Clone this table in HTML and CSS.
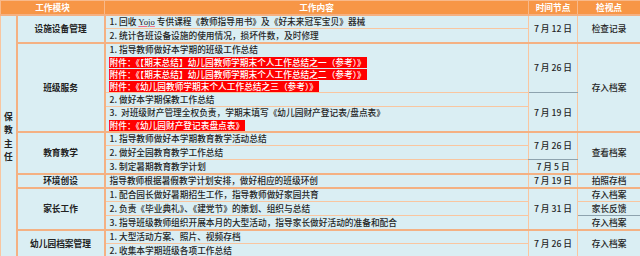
FILE: index.html
```html
<!DOCTYPE html>
<html lang="zh-CN">
<head>
<meta charset="utf-8">
<title>保教主任工作安排</title>
<link rel="stylesheet" href="styles.css">
</head>
<body>
<table class="plan">
  <colgroup>
    <col class="c-role"><col class="c-mod"><col class="c-content"><col class="c-time"><col class="c-check">
  </colgroup>
  <thead>
    <tr><th colspan="2">工作模块</th><th>工作内容</th><th>时间节点</th><th>检视点</th></tr>
  </thead>
  <tbody>
    <tr class="grp">
      <td rowspan="14" class="role"><span class="vert">保教主任</span></td>
      <td rowspan="2" class="mod">设施设备管理</td>
      <td class="txt">1. 回收 <span class="sp">Yojo</span> 专供课程《教师指导用书》及《好未来冠军宝贝》器械</td>
      <td rowspan="2" class="ctr">7 月 12 日</td>
      <td rowspan="2" class="ctr">检查记录</td>
    </tr>
    <tr><td class="txt">2. 统计各班设备设施的使用情况，损坏件数，及时修理</td></tr>
    <tr class="grp">
      <td rowspan="3" class="mod">班级服务</td>
      <td class="txt">1. 指导教师做好本学期的班级工作总结<br><span class="att">附件：《【期末总结】幼儿园教师学期末个人工作总结之一（参考）》</span><br><span class="att">附件：《【期末总结】幼儿园教师学期末个人工作总结之二（参考）》</span><br><span class="att">附件：《幼儿园教师学期末个人工作总结之三（参考）》</span></td>
      <td class="ctr gray-b">7 月 26 日</td>
      <td rowspan="3" class="ctr">存入档案</td>
    </tr>
    <tr><td class="txt">2. 做好本学期保教工作总结</td><td rowspan="2" class="ctr">7 月 19 日</td></tr>
    <tr class="two"><td class="txt">3.&nbsp; 对班级财产管理全权负责，学期末填写《幼儿园财产登记表/盘点表》<br><span class="att">附件：《幼儿园财产登记表盘点表》</span></td></tr>
    <tr class="grp">
      <td rowspan="3" class="mod">教育教学</td>
      <td class="txt">1. 指导教师做好本学期教育教学活动总结</td>
      <td rowspan="2" class="ctr gray-b">7 月 26 日</td>
      <td rowspan="3" class="ctr">查看档案</td>
    </tr>
    <tr><td class="txt">2. 做好全园教育教学工作总结</td></tr>
    <tr><td class="txt">3. 制定暑期教育教学计划</td><td class="ctr">7 月 5 日</td></tr>
    <tr class="grp">
      <td class="mod">环境创设</td>
      <td class="txt">指导教师根据暑假教学计划安排，做好相应的班级环创</td>
      <td class="ctr">7 月 19 日</td>
      <td class="ctr">拍照存档</td>
    </tr>
    <tr class="grp">
      <td rowspan="3" class="mod">家长工作</td>
      <td class="txt">1. 配合园长做好暑期招生工作，指导教师做好家园共育</td>
      <td rowspan="3" class="ctr">7 月 31 日</td>
      <td class="ctr">存入档案</td>
    </tr>
    <tr><td class="txt">2. 负责《毕业典礼》、《建党节》的策划、组织与总结</td><td class="ctr gray-b">家长反馈</td></tr>
    <tr><td class="txt">3. 指导班级教师组织开展本月的大型活动，指导家长做好活动的准备和配合</td><td class="ctr">存入档案</td></tr>
    <tr class="grp">
      <td rowspan="2" class="mod">幼儿园档案管理</td>
      <td class="txt">1. 大型活动方案、照片、视频存档</td>
      <td rowspan="2" class="ctr">7 月 26 日</td>
      <td rowspan="2" class="ctr">存入档案</td>
    </tr>
    <tr><td class="txt">2. 收集本学期班级各项工作总结</td></tr>
  </tbody>
</table>
</body>
</html>
```

FILE: styles.css
```css
html, body {
  margin: 0;
  padding: 0;
  background: #ffffff;
}

body {
  font-family: "Noto Sans CJK SC", sans-serif;
  font-size: 8.7px;
  color: #262626;
}

.plan {
  width: 640px;
  table-layout: fixed;
  border-collapse: collapse;
  border: 1px solid #f4b183;
}

.c-role { width: 16px; }
.c-mod { width: 88px; }
.c-content { width: 424px; }
.c-time { width: 49px; }
.c-check { width: 63px; }

.plan th {
  background: #f79646;
  color: #ffffff;
  font-weight: bold;
  height: 13px;
  line-height: 13px;
  padding: 0;
  text-align: center;
  border: 1px solid #f8b98a;
  border-bottom-color: #f4b183;
}

.plan td {
  background: #daeef3;
  height: 12px;
  line-height: 12px;
  padding: 0 3px;
  border: 1px solid #f9c6a0;
  vertical-align: middle;
  white-space: nowrap;
  overflow: hidden;
}

.plan tr:not(.grp) > td {
  height: 13px;
  line-height: 13px;
}

.plan tr.two > td {
  height: 12px;
  line-height: 12px;
}

.plan tr.grp > td {
  border-top: 2px solid #f4b183;
}

.plan td.role {
  padding: 0;
  border-right: 2px solid #f4b183;
}

.vert {
  display: block;
  width: 1em;
  margin: 0 auto;
  white-space: normal;
  line-height: 13.5px;
  font-weight: bold;
  color: #222222;
}

.plan td.mod {
  text-align: center;
  font-weight: bold;
  color: #222222;
  border-right: 2px solid #f4b183;
}

.plan td.txt {
  padding-left: 4px;
  font-weight: 500;
}

.plan td.ctr {
  text-align: center;
  padding: 0;
  font-weight: 500;
}

.plan td.gray-b {
  border-bottom: 1px solid #8ea3ae;
}

.sp {
  font-family: "Liberation Serif", serif;
  text-decoration: underline;
  text-decoration-color: #f06c8a;
}

.att {
  display: inline-block;
  background: #ff0000;
  color: #ffffff;
  height: 11px;
  line-height: 11px;
  padding: 0 1px;
  margin: 1px 0 0 -1px;
  vertical-align: top;
}
```
